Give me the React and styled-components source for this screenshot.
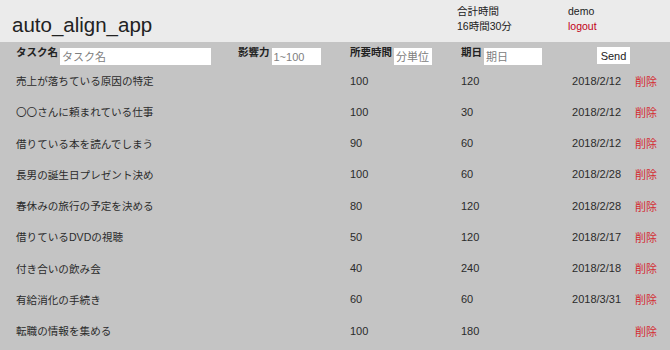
import React from 'react';
import styled, { createGlobalStyle } from 'styled-components';

const GlobalStyle = createGlobalStyle`
  html, body {
    margin: 0;
    padding: 0;
    background: #c4c4c4;
    font-family: "Liberation Sans", "Noto Sans CJK JP", sans-serif;
    color: #2b2b2b;
  }
`;

const Page = styled.div`
  width: 670px;
  min-height: 350px;
  background: #c4c4c4;
`;

const Header = styled.header`
  height: 42px;
  background: #ebebeb;
  display: flex;
  align-items: flex-start;
  box-sizing: border-box;
`;

const Title = styled.h1`
  margin: 0;
  padding: 13px 0 0 12px;
  font-size: 20.5px;
  font-weight: normal;
  line-height: 24px;
  color: #222;
  flex: 1;
`;

const InfoBlock = styled.div`
  width: ${({ $w }) => $w}px;
  padding-top: 4px;
  font-size: 10.5px;
  line-height: 15px;
  color: #222;
`;

const Logout = styled.a`
  color: #c20016;
  text-decoration: none;
  display: block;
`;

const Form = styled.form`
  height: 23px;
  box-sizing: border-box;
  padding-left: 16px;
  display: grid;
  grid-template-columns: 222px 112px 111px 136px 1fr;
  align-items: start;
`;

const Field = styled.div`
  display: flex;
  align-items: flex-start;
  gap: 2px;
`;

const Label = styled.label`
  font-size: 10.5px;
  font-weight: bold;
  line-height: 13px;
  padding-top: 4px;
  color: #222;
`;

const Input = styled.input`
  width: ${({ $w }) => $w}px;
  height: 17px;
  margin-top: 6px;
  box-sizing: border-box;
  border: none;
  outline: none;
  background: #fff;
  padding: 0 2px;
  font-family: inherit;
  font-size: 11px;
  &::placeholder {
    color: #808080;
  }
`;

const SendButton = styled.button`
  width: 33px;
  height: 17px;
  margin-top: 5px;
  border: none;
  background: #fff;
  padding: 0;
  font-family: inherit;
  font-size: 11px;
  color: #222;
`;

const List = styled.div`
  display: flex;
  flex-direction: column;
`;

const Row = styled.div`
  height: 31.25px;
  padding: 0 13px 0 16px;
  display: grid;
  grid-template-columns: 334px 111px 70px 90px 36px;
  align-items: center;
  font-size: 11px;
  color: #2b2b2b;
`;

const NameCell = styled.span`
  font-size: 10.6px;
`;

const DateCell = styled.span`
  text-align: right;
`;

const Delete = styled.a`
  padding-left: 14px;
  color: #d42a30;
  cursor: pointer;
`;

const tasks = [
  { name: '売上が落ちている原因の特定', impact: 100, time: 120, due: '2018/2/12' },
  { name: '〇〇さんに頼まれている仕事', impact: 100, time: 30, due: '2018/2/12' },
  { name: '借りている本を読んでしまう', impact: 90, time: 60, due: '2018/2/12' },
  { name: '長男の誕生日プレゼント決め', impact: 100, time: 60, due: '2018/2/28' },
  { name: '春休みの旅行の予定を決める', impact: 80, time: 120, due: '2018/2/28' },
  { name: '借りているDVDの視聴', impact: 50, time: 120, due: '2018/2/17' },
  { name: '付き合いの飲み会', impact: 40, time: 240, due: '2018/2/18' },
  { name: '有給消化の手続き', impact: 60, time: 60, due: '2018/3/31' },
  { name: '転職の情報を集める', impact: 100, time: 180, due: '' },
];

export default function App() {
  return (
    <Page>
      <GlobalStyle />
      <Header>
        <Title>auto_align_app</Title>
        <InfoBlock $w={111}>
          合計時間
          <br />
          16時間30分
        </InfoBlock>
        <InfoBlock $w={102}>
          demo
          <Logout href="#">logout</Logout>
        </InfoBlock>
      </Header>
      <Form onSubmit={(e) => e.preventDefault()}>
        <Field>
          <Label>タスク名</Label>
          <Input $w={151} placeholder="タスク名" />
        </Field>
        <Field>
          <Label>影響力</Label>
          <Input $w={49} placeholder="1~100" />
        </Field>
        <Field>
          <Label>所要時間</Label>
          <Input $w={38} placeholder="分単位" />
        </Field>
        <Field>
          <Label>期日</Label>
          <Input $w={58} placeholder="期日" />
        </Field>
        <Field>
          <SendButton type="submit">Send</SendButton>
        </Field>
      </Form>
      <List>
        {tasks.map((t) => (
          <Row key={t.name}>
            <NameCell>{t.name}</NameCell>
            <span>{t.impact}</span>
            <span>{t.time}</span>
            <DateCell>{t.due}</DateCell>
            <Delete>削除</Delete>
          </Row>
        ))}
      </List>
    </Page>
  );
}
